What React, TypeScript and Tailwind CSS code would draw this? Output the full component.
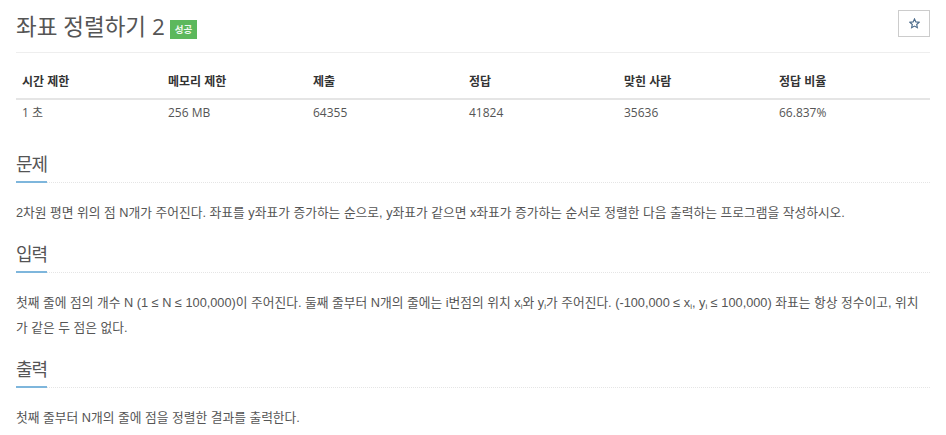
const FONT = "font-['Open_Sans','Noto_Sans_CJK_KR',sans-serif]";
const BODY = "font-['Liberation_Sans','Noto_Sans_CJK_KR',sans-serif]";

const STATS = [
  { label: "시간 제한", value: "1 초", w: "w-[146px]" },
  { label: "메모리 제한", value: "256 MB", w: "w-[145px]" },
  { label: "제출", value: "64355", w: "w-[156px]" },
  { label: "정답", value: "41824", w: "w-[155px]" },
  { label: "맞힌 사람", value: "35636", w: "w-[155px]" },
  { label: "정답 비율", value: "66.837%", w: "flex-1" },
];

function Sub() {
  return <sub className="text-[8px] leading-none">i</sub>;
}

function Section({ title, first, children }: { title: string; first?: boolean; children: React.ReactNode }) {
  return (
    <section className={first ? "mt-[26px]" : "mt-[17px]"}>
      <div className="flex items-end border-b border-dotted border-[#e5e5e5]">
        <h2 className="-mb-px border-b-2 border-[#7eb6dc] pb-[5px] text-[18px] leading-[24px] tracking-[-1px] text-[#555]">
          {title}
        </h2>
      </div>
      <div className={`${BODY} mt-[17px] text-[12.75px] leading-[25px] text-[#555]`}>{children}</div>
    </section>
  );
}

export default function App() {
  return (
    <div className={`${FONT} min-h-[435px] bg-white px-4 pt-[10px]`}>
      <div className="flex items-start justify-between border-b border-[#eee] pb-[10px]">
        <div className="flex items-center pt-[2px]">
          <h1 className="text-[22.5px] leading-[30px] text-[#555]">좌표 정렬하기 2</h1>
          <span className="ml-[5px] mt-[5px] bg-[#5cb85c] px-[5px] py-[3px] text-[9.5px] font-bold leading-[13px] text-[#eef8ee]">
            성공
          </span>
        </div>
        <button className="flex h-[27px] w-[32px] items-center justify-center border border-[#ccc] bg-white">
          <svg width="11" height="11" viewBox="0 0 24 24" fill="none" stroke="#4a6a8a" strokeWidth="2.5">
            <path d="M12 2l3 6.5 7 .8-5.2 4.8 1.4 7L12 17.6 5.8 21.1l1.4-7L2 9.3l7-.8z" />
          </svg>
        </button>
      </div>

      <div className="mt-[20px] text-[12px] text-[#555]">
        <div className="flex border-b-2 border-[#e5e5e5] pb-[7px] font-bold text-[#333]">
          {STATS.map((s) => (
            <div key={s.label} className={`${s.w} pl-[6px] leading-[18px]`}>
              {s.label}
            </div>
          ))}
        </div>
        <div className="flex py-[4px]">
          {STATS.map((s) => (
            <div key={s.label} className={`${s.w} pl-[6px] leading-[18px]`}>
              {s.value}
            </div>
          ))}
        </div>
      </div>

      <Section title="문제" first>
        <p>
          2차원 평면 위의 점 N개가 주어진다. 좌표를 y좌표가 증가하는 순으로, y좌표가 같으면 x좌표가 증가하는 순서로 정렬한 다음 출력하는 프로그램을 작성하시오.
        </p>
      </Section>

      <Section title="입력">
        <p>
          첫째 줄에 점의 개수 N (1 ≤ N ≤ 100,000)이 주어진다. 둘째 줄부터 N개의 줄에는 i번점의 위치 x<Sub />와 y<Sub />가 주어진다. (-100,000 ≤ x<Sub />, y<Sub /> ≤ 100,000) 좌표는 항상 정수이고, 위치가 같은 두 점은 없다.
        </p>
      </Section>

      <Section title="출력">
        <p>첫째 줄부터 N개의 줄에 점을 정렬한 결과를 출력한다.</p>
      </Section>
    </div>
  );
}
